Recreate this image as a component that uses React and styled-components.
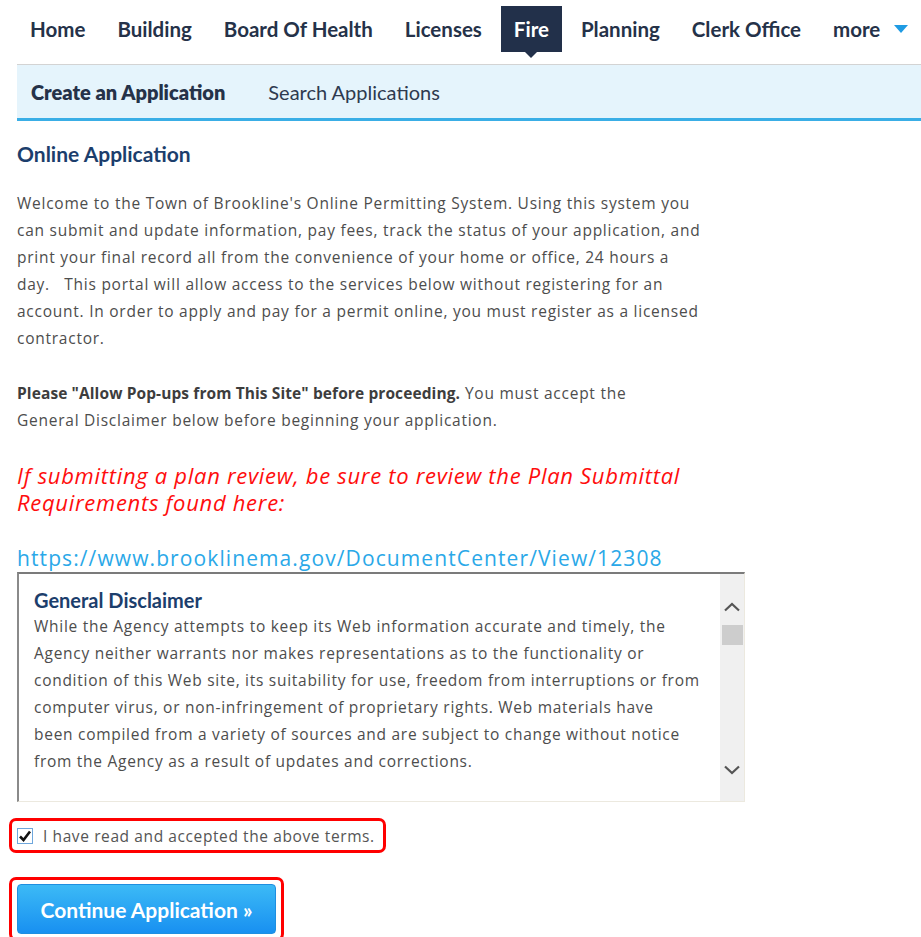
import React from "react";
import styled, { createGlobalStyle } from "styled-components";

const GlobalStyle = createGlobalStyle`
  body {
    margin: 0;
    background: #fff;
    font-family: "Open Sans", Lato, sans-serif;
    color: #4d4d4d;
  }
`;

const tabs = [
  "Home",
  "Building",
  "Board Of Health",
  "Licenses",
  "Fire",
  "Planning",
  "Clerk Office",
];

// disclaimer copy, broken the way the portal lays it out
const disclaimerLines = [
  "While the Agency attempts to keep its Web information accurate and timely, the",
  "Agency neither warrants nor makes representations as to the functionality or",
  "condition of this Web site, its suitability for use, freedom from interruptions or from",
  "computer virus, or non-infringement of proprietary rights. Web materials have",
  "been compiled from a variety of sources and are subject to change without notice",
  "from the Agency as a result of updates and corrections.",
];

function App() {
  return (
    <Page>
      <GlobalStyle />
      <TopNav>
        {tabs.map((t) => (
          <Tab key={t} $active={t === "Fire"}>
            {t}
          </Tab>
        ))}
        <Tab>
          more
          <MoreArrow />
        </Tab>
      </TopNav>

      <SubNav>
        <SubLink $bold>Create an Application</SubLink>
        <SubLink>Search Applications</SubLink>
      </SubNav>

      <Content>
        <Title>Online Application</Title>
        <Para $width={695}>
          Welcome to the Town of Brookline's Online Permitting System. Using
          this system you can submit and update information, pay fees, track
          the status of your application, and print your final record all from
          the convenience of your home or office, 24 hours a day.&nbsp;&nbsp;
          This portal will allow access to the services below without
          registering for an account. In order to apply and pay for a permit
          online, you must register as a licensed contractor.
        </Para>
        <Para $width={660}>
          <b>Please "Allow Pop-ups from This Site" before proceeding.</b> You
          must accept the General Disclaimer below before beginning your
          application.
        </Para>
        <Notice>
          If submitting a plan review, be sure to review the Plan Submittal
          Requirements found here:
        </Notice>
        <DocLink href="#">
          https://www.brooklinema.gov/DocumentCenter/View/12308
        </DocLink>

        <DisclaimerBox>
          <DisclaimerBody>
            <DisclaimerTitle>General Disclaimer</DisclaimerTitle>
            <DisclaimerText>
              {disclaimerLines.map((line) => (
                <span key={line}>{line}</span>
              ))}
            </DisclaimerText>
          </DisclaimerBody>
          <ScrollTrack>
            <Chevron viewBox="0 0 18 10">
              <path d="M2 8.5 L9 2 L16 8.5" />
            </Chevron>
            <Thumb />
            <TrackFill />
            <Chevron viewBox="0 0 18 10">
              <path d="M2 1.5 L9 8 L16 1.5" />
            </Chevron>
          </ScrollTrack>
        </DisclaimerBox>

        <Highlight $top={16}>
          <CheckRow>
            <CheckBox>
              <svg viewBox="0 0 16 16" width="16" height="16">
                <path
                  d="M3 8.5 L6.5 12 L13 3.5"
                  fill="none"
                  stroke="#111"
                  strokeWidth="2.6"
                />
              </svg>
            </CheckBox>
            I have read and accepted the above terms.
          </CheckRow>
        </Highlight>

        <Highlight $top={24}>
          <ContinueButton>Continue Application »</ContinueButton>
        </Highlight>
      </Content>
    </Page>
  );
}

const Page = styled.div`
  width: 921px;
  overflow: hidden;
`;

const TopNav = styled.nav`
  display: flex;
  align-items: flex-start;
  gap: 6px;
  height: 58px;
  padding-top: 6px;
  margin: 0 -40px 0 17px;
  border-bottom: 1px solid #d3d3d3;
  font-family: Lato, sans-serif;
`;

const Tab = styled.div`
  position: relative;
  display: flex;
  align-items: center;
  height: 46px;
  padding: 0 13px;
  font-size: 20.5px;
  font-weight: 700;
  white-space: nowrap;
  color: ${(p) => (p.$active ? "#fff" : "#253249")};
  background: ${(p) => (p.$active ? "#22304a" : "transparent")};

  ${(p) =>
    p.$active &&
    `
    &::after {
      content: "";
      position: absolute;
      left: 50%;
      bottom: -6px;
      margin-left: -6px;
      border-left: 6px solid transparent;
      border-right: 6px solid transparent;
      border-top: 6px solid #22304a;
    }
  `}
`;

const MoreArrow = styled.span`
  margin-left: 14px;
  border-left: 7px solid transparent;
  border-right: 7px solid transparent;
  border-top: 8px solid #1f9be3;
`;

const SubNav = styled.div`
  display: flex;
  align-items: center;
  gap: 43px;
  height: 53px;
  margin-left: 17px;
  padding-left: 14px;
  background: #e5f4fc;
  border-bottom: 3px solid #3aaee6;
  font-family: Lato, sans-serif;
`;

const SubLink = styled.span`
  font-size: 20px;
  font-weight: ${(p) => (p.$bold ? 800 : 400)};
  color: ${(p) => (p.$bold ? "#253249" : "#2e3a4f")};
`;

const Content = styled.main`
  padding: 20px 0 0 17px;
`;

const Title = styled.h2`
  margin: 0 0 24px;
  font-family: Lato, sans-serif;
  font-size: 21px;
  font-weight: 700;
  color: #1c3e6c;
`;

const Para = styled.p`
  width: ${(p) => p.$width}px;
  margin: 0 0 28px;
  font-size: 15.5px;
  letter-spacing: 0.75px;
  line-height: 27px;
  color: #4d4d4d;

  b {
    font-weight: 700;
    letter-spacing: 0.1px;
    color: #3d3d3d;
  }
`;

const Notice = styled.p`
  width: 700px;
  margin: 26px 0 28px;
  font-size: 22px;
  letter-spacing: 0.7px;
  line-height: 27px;
  font-style: italic;
  color: #ff0d0d;
`;

const DocLink = styled.a`
  display: block;
  font-size: 21px;
  letter-spacing: 1.1px;
  line-height: 28px;
  color: #2aa8e8;
  text-decoration: none;
`;

const DisclaimerBox = styled.div`
  display: flex;
  width: 728px;
  height: 230px;
  box-sizing: border-box;
  border-top: 2px solid #7b7b7b;
  border-left: 2px solid #8a8a8a;
  border-bottom: 1px solid #ece9df;
  border-right: 1px solid #ece9df;
`;

const DisclaimerBody = styled.div`
  flex: 1;
  padding: 14px 0 0 15px;
  white-space: nowrap;
`;

const DisclaimerTitle = styled.div`
  font-family: Lato, sans-serif;
  font-size: 20px;
  font-weight: 700;
  line-height: 25px;
  color: #1c3e6c;
`;

const DisclaimerText = styled.div`
  display: flex;
  flex-direction: column;
  font-size: 15.5px;
  letter-spacing: 0.72px;
  line-height: 27px;
  color: #4d4d4d;
`;

const ScrollTrack = styled.div`
  display: flex;
  flex-direction: column;
  align-items: center;
  width: 24px;
  background: #f0f0f0;
  padding: 28px 0 26px;
`;

const Chevron = styled.svg`
  width: 18px;
  height: 10px;
  fill: none;
  stroke: #555;
  stroke-width: 2.2;
`;

const Thumb = styled.div`
  width: 21px;
  height: 20px;
  margin-top: 13px;
  background: #cdcdcd;
`;

const TrackFill = styled.div`
  flex: 1;
`;

const Highlight = styled.div`
  width: fit-content;
  margin: ${(p) => p.$top}px 0 0 -8px;
  padding: 4px 5px;
  border: 3px solid #ff0000;
  border-radius: 7px;
`;

const CheckRow = styled.label`
  display: flex;
  align-items: center;
  gap: 10px;
  height: 21px;
  padding-right: 3px;
  font-size: 15.5px;
  letter-spacing: 0.6px;
  color: #555;
`;

const CheckBox = styled.span`
  display: flex;
  width: 16px;
  height: 16px;
  box-sizing: border-box;
  border: 1px solid #6fa7dc;
  background: #fff;
  svg {
    margin: -1px;
  }
`;

const ContinueButton = styled.button`
  display: block;
  width: 259px;
  height: 50px;
  border: 1px solid #1f8fe0;
  border-radius: 4px;
  background: linear-gradient(#3cbaf6, #1890f1);
  color: #fff;
  font-family: Lato, sans-serif;
  font-size: 21px;
  font-weight: 700;
  cursor: pointer;
`;

export default App;
